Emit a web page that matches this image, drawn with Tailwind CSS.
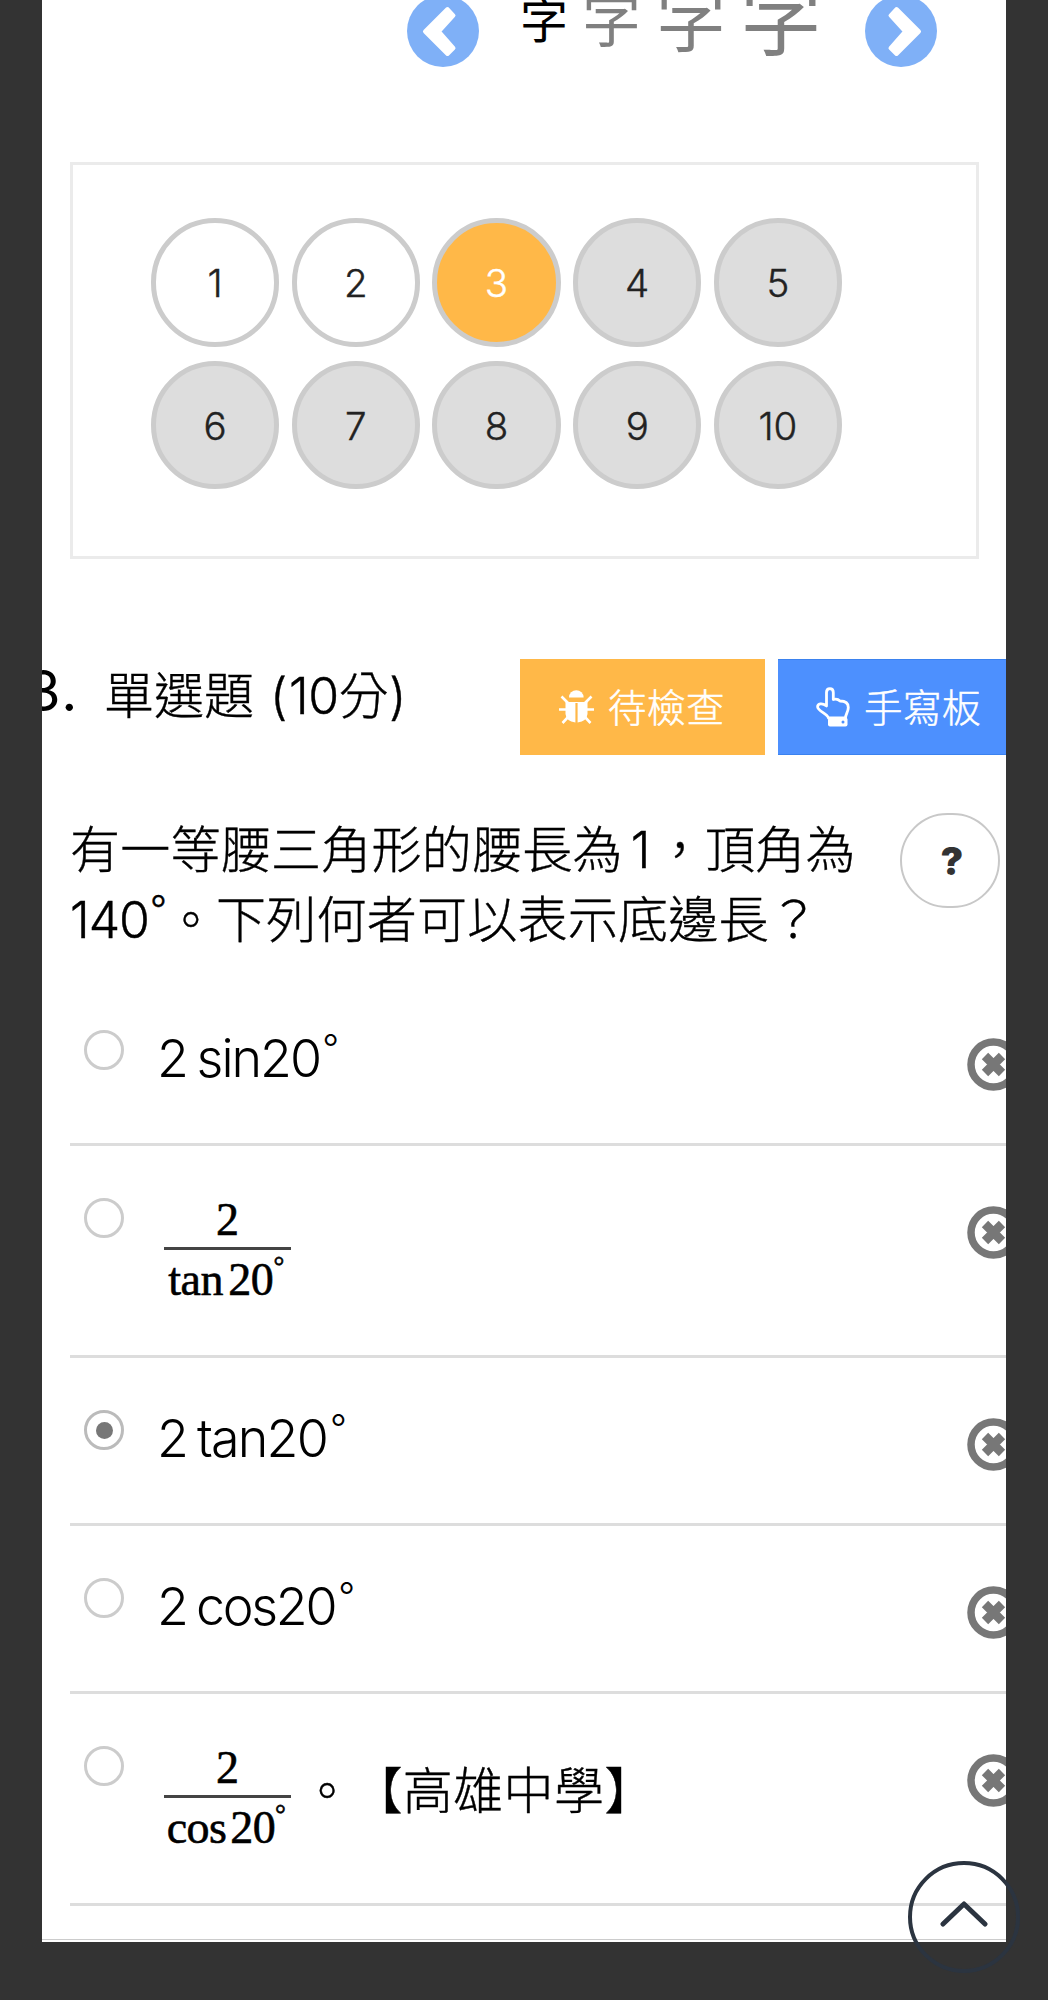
<!DOCTYPE html>
<html lang="zh-Hant">
<head>
  <meta charset="UTF-8">
  <meta name="viewport" content="width=device-width, initial-scale=1.0">
  <title>線上測驗</title>
  <script src="https://cdn.jsdelivr.net/npm/@tailwindcss/browser@4"></script>
</head>
<body class="relative h-[2000px] overflow-hidden bg-[#333] pl-[42px] font-['Inter','Noto_Sans_CJK_TC',sans-serif] font-light text-black">

  <!-- Shared icons -->
  <svg class="hidden">
    <symbol id="cross" viewBox="0 0 53 53">
      <circle cx="26.5" cy="26.5" r="22.5" fill="none" stroke="#777" stroke-width="7.5" />
      <path d="M18 18L35 35M35 18L18 35" stroke="#777" stroke-width="9" />
    </symbol>
  </svg>

  <main class="h-[1942px] w-[964px] overflow-hidden bg-white">

    <!-- Font size switcher -->
    <header class="flex h-[162px] items-start pl-[365px]">
      <svg class="-mt-[5px] h-[72px] w-[72px] shrink-0" viewBox="0 0 72 72">
        <circle cx="36" cy="36" r="36" fill="#7fb0f7" />
        <path d="M18 36.5L40.5 14L46.5 20.5L32 36.5L46.5 53L40.5 59Z" fill="#fff" stroke="#fff" stroke-width="4" stroke-linejoin="round" />
      </svg>
      <div class="ml-[41px] flex w-[345px] shrink-0 items-start font-normal text-[#808080]">
        <span class="-mt-[3px] w-[62px] text-[48px] leading-[48px] text-black">字</span>
        <span class="-mt-[9px] w-[74px] text-[59px] leading-[59px]">字</span>
        <span class="-mt-[13px] w-[84px] text-[70px] leading-[70px]">字</span>
        <span class="-mt-[21px] text-[82px] leading-[82px]">字</span>
      </div>
      <svg class="-mt-[5px] h-[72px] w-[72px] shrink-0" viewBox="0 0 72 72">
        <circle cx="36" cy="36" r="36" fill="#7fb0f7" />
        <path d="M54 36.5L31.5 14L25.5 20.5L40 36.5L25.5 53L31.5 59Z" fill="#fff" stroke="#fff" stroke-width="4" stroke-linejoin="round" />
      </svg>
    </header>

    <!-- Question navigation -->
    <nav class="ml-[28px] h-[397px] w-[909px] border-3 border-[#ebebeb] pt-[53px] pl-[78px] text-[38.5px] leading-none text-[#222] [-webkit-text-stroke:.4px]">
      <div class="grid w-[691px] grid-cols-5 gap-x-[12.6px] gap-y-[14px]">
        <div class="flex h-[128.5px] items-center justify-center rounded-full border-[5.5px] border-[#ccc] pt-[2px]">1</div>
        <div class="flex h-[128.5px] items-center justify-center rounded-full border-[5.5px] border-[#ccc] pt-[2px]">2</div>
        <div class="flex h-[128.5px] items-center justify-center rounded-full border-[5.5px] border-[#ccc] bg-[#ffb848] pt-[2px] text-white">3</div>
        <div class="flex h-[128.5px] items-center justify-center rounded-full border-[5.5px] border-[#ccc] bg-[#ddd] pt-[2px]">4</div>
        <div class="flex h-[128.5px] items-center justify-center rounded-full border-[5.5px] border-[#ccc] bg-[#ddd] pt-[2px]">5</div>
        <div class="flex h-[128.5px] items-center justify-center rounded-full border-[5.5px] border-[#ccc] bg-[#ddd] pt-[2px]">6</div>
        <div class="flex h-[128.5px] items-center justify-center rounded-full border-[5.5px] border-[#ccc] bg-[#ddd] pt-[2px]">7</div>
        <div class="flex h-[128.5px] items-center justify-center rounded-full border-[5.5px] border-[#ccc] bg-[#ddd] pt-[2px]">8</div>
        <div class="flex h-[128.5px] items-center justify-center rounded-full border-[5.5px] border-[#ccc] bg-[#ddd] pt-[2px]">9</div>
        <div class="flex h-[128.5px] items-center justify-center rounded-full border-[5.5px] border-[#ccc] bg-[#ddd] pt-[2px]">10</div>
      </div>
    </nav>

    <!-- Question title -->
    <section class="flex h-[254px] items-start pt-[100px] whitespace-nowrap">
      <div class="-ml-[16px] w-[78px] shrink-0 pt-[2px] text-[56px] leading-[60px] font-normal tracking-[2px]">3.</div>
      <div class="w-[416px] shrink-0 pt-[7px] text-[50px] leading-[60px] [-webkit-text-stroke:.4px]">單選題 <span class="ml-[2px] tracking-[-.5px]">(<span class="ml-[2px]">10</span>分<span class="ml-px">)</span></span></div>
      <div class="flex h-[96px] w-[245px] shrink-0 items-center bg-[#ffb848] pl-[39px] text-[38.5px] text-white [-webkit-text-stroke:.5px]">
        <svg class="h-[34px] w-[35px]" viewBox="0 0 35 34" fill="none" stroke="#fff" stroke-width="2.6">
          <path d="M10 7.5a7.3 7.3 0 0 1 14.6 0z" fill="#fff" stroke="none" />
          <path d="M6.5 12H28.5V24Q28 31 18.6 32.5V13H16.4V32.5Q7 31 6.5 24Z" fill="#fff" stroke="none" />
          <path d="M0 19.5H7M28 19.5H35M2.5 6.5L9 13M32.5 6.5L26 13M3.5 33L10 26M31.5 33L25 26" />
        </svg>
        <span class="ml-[14px] pt-[3px] tracking-[.5px]">待檢查</span>
      </div>
      <div class="ml-[13px] flex h-[96px] w-[245px] shrink-0 items-center border-y border-[#3b82ef] bg-[#4d90fe] pl-[38px] text-[38.5px] text-white [-webkit-text-stroke:.5px]">
        <svg class="h-[40px] w-[34px]" viewBox="0 0 34 40" fill="none" stroke="#fff" stroke-width="2.8" stroke-linejoin="round">
          <path d="M12.5 31C11 26 2 24.5 1.6 20C1.5 16.5 6 15.5 10.5 19V5.5C10.5 .2 17.3 .2 17.3 5.5V12.5C20 11.5 22.5 12.5 24 14C29 14 32.3 16 32.3 20.5C32.3 25 29.5 27 29.5 31Z" />
          <rect x="12" y="30.5" width="19.5" height="9" rx="2" fill="#fff" stroke="none" />
          <circle cx="27" cy="35" r="1.5" fill="#4d90fe" stroke="none" />
        </svg>
        <span class="ml-[14px] pt-[3px] tracking-[.5px]">手寫板</span>
      </div>
    </section>

    <!-- Question text -->
    <section class="flex h-[165px] items-start pl-[28px]">
      <p class="w-[830px] shrink-0 pt-[2px] text-[50px] leading-[70px] tracking-[.25px] whitespace-nowrap [-webkit-text-stroke:.4px]">有一等腰三角形的腰長為<span class="ml-[8px] mr-[4px]">1</span>，頂角為<br><span class="tracking-[-1px]">140<span class="ml-px align-[16px] text-[37px] leading-none">°</span></span>。下列何者可以表示底邊長？</p>
      <button class="flex h-[95px] w-[100px] shrink-0 items-center justify-center rounded-full border-2 border-[#c8c8c8] pt-[2px] pl-[4px] text-[38px] font-black text-[#333]">?</button>
    </section>

    <!-- Answers -->
    <ul class="ml-[28px] w-[936px] text-[52px] leading-[60px] whitespace-nowrap">
      <li class="flex h-[168px] items-start border-b-3 border-[#ddd]">
        <span class="mt-[52px] ml-[14px] size-[40px] shrink-0 rounded-full border-3 border-[#ccc]"></span>
        <span class="mt-[51px] ml-[33px] w-[740px] shrink-0 tracking-[-2px] [word-spacing:-3px]">2 sin20<span class="ml-[2px] align-[16px] text-[37px] leading-none">°</span></span>
        <svg class="mt-[60px] ml-[70px] size-[53px] shrink-0"><use href="#cross" /></svg>
      </li>
      <li class="flex h-[212px] items-start border-b-3 border-[#ddd]">
        <span class="mt-[52px] ml-[14px] size-[40px] shrink-0 rounded-full border-3 border-[#ccc]"></span>
        <span class="mt-[47px] ml-[40px] flex w-[127px] shrink-0 flex-col items-center font-['Liberation_Serif',serif] text-[46px] leading-[53px] font-normal [-webkit-text-stroke:.6px]">
          <span class="w-full border-b-3 border-[#444] pb-px text-center">2</span>
          <span class="-mt-px -ml-[3px] pt-[4px] tracking-[-.4px]">tan<span class="ml-[5px]">20<span class="align-[20px] text-[27px] leading-none">°</span></span></span>
        </span>
        <svg class="mt-[60px] ml-[676px] size-[53px] shrink-0"><use href="#cross" /></svg>
      </li>
      <li class="flex h-[168px] items-start border-b-3 border-[#ddd]">
        <span class="mt-[52px] ml-[14px] flex size-[40px] shrink-0 items-center justify-center rounded-full border-3 border-[#bbb]"><span class="size-[17px] rounded-full bg-[#777]"></span></span>
        <span class="mt-[51px] ml-[33px] w-[740px] shrink-0 tracking-[-1.8px] [word-spacing:-3px]">2 tan20<span class="ml-[3px] align-[16px] text-[37px] leading-none">°</span></span>
        <svg class="mt-[60px] ml-[70px] size-[53px] shrink-0"><use href="#cross" /></svg>
      </li>
      <li class="flex h-[168px] items-start border-b-3 border-[#ddd]">
        <span class="mt-[52px] ml-[14px] size-[40px] shrink-0 rounded-full border-3 border-[#ccc]"></span>
        <span class="mt-[51px] ml-[33px] w-[740px] shrink-0 tracking-[-2.3px] [word-spacing:-3px]">2 cos20<span class="ml-[3px] align-[16px] text-[37px] leading-none">°</span></span>
        <svg class="mt-[60px] ml-[70px] size-[53px] shrink-0"><use href="#cross" /></svg>
      </li>
      <li class="flex h-[212px] items-start border-b-3 border-[#ddd]">
        <span class="mt-[52px] ml-[14px] size-[40px] shrink-0 rounded-full border-3 border-[#ccc]"></span>
        <span class="mt-[47px] ml-[40px] flex w-[127px] shrink-0 flex-col items-center font-['Liberation_Serif',serif] text-[46px] leading-[53px] font-normal [-webkit-text-stroke:.6px]">
          <span class="w-full border-b-3 border-[#444] pb-px text-center">2</span>
          <span class="-mt-px -ml-[3px] pt-[4px] tracking-[-.6px]">cos<span class="ml-[4px]">20<span class="align-[20px] text-[27px] leading-none">°</span></span></span>
        </span>
        <span class="mt-[67px] ml-[11px] w-[400px] shrink-0 text-[50px] tracking-[.4px] [-webkit-text-stroke:.4px] [text-spacing-trim:space-all]">。【高雄中學】</span>
        <svg class="mt-[60px] ml-[265px] size-[53px] shrink-0"><use href="#cross" /></svg>
      </li>
    </ul>
    <div class="mt-[33px] h-px bg-[#ccc]"></div>
  </main>

  <!-- Back to top -->
  <button class="absolute top-[1861px] left-[908px] flex size-[112px] items-center justify-center rounded-full border-4 border-[#2b3440]">
    <svg class="-mt-[6px] h-[26px] w-[48px]" viewBox="0 0 48 26" fill="none" stroke="#2b3440" stroke-width="5" stroke-linecap="round" stroke-linejoin="round">
      <path d="M3 23L24 3L45 23" />
    </svg>
  </button>

</body>
</html>
